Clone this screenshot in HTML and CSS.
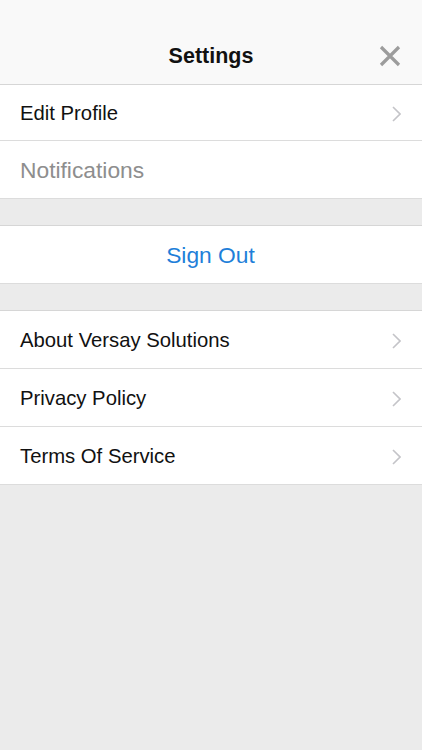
FILE: index.html
```html
<!DOCTYPE html>
<html lang="en">
<head>
    <meta charset="UTF-8">
    <meta name="viewport" content="width=device-width, initial-scale=1.0">
    <title>Settings</title>
    <link rel="stylesheet" href="styles.css">
</head>
<body>
    <header class="nav-bar">
        <h1 class="nav-title">Settings</h1>
        <button class="close-btn" aria-label="Close">
            <svg width="22" height="22" viewBox="0 0 22 22">
                <path d="M2 2 L20 20 M20 2 L2 20" stroke="#9c9c9c" stroke-width="3.2" fill="none"/>
            </svg>
        </button>
    </header>

    <ul class="group first">
        <li class="row">
            <span>Edit Profile</span>
            <svg class="chevron" width="9" height="16" viewBox="0 0 9 16"><path d="M1 1 L8 8 L1 15" stroke="#c4c4c8" stroke-width="1.6" fill="none"/></svg>
        </li>
        <li class="row disabled"><span>Notifications</span></li>
    </ul>

    <ul class="group">
        <li class="row action"><span>Sign Out</span></li>
    </ul>

    <ul class="group">
        <li class="row">
            <span>About Versay Solutions</span>
            <svg class="chevron" width="9" height="16" viewBox="0 0 9 16"><path d="M1 1 L8 8 L1 15" stroke="#c4c4c8" stroke-width="1.6" fill="none"/></svg>
        </li>
        <li class="row">
            <span>Privacy Policy</span>
            <svg class="chevron" width="9" height="16" viewBox="0 0 9 16"><path d="M1 1 L8 8 L1 15" stroke="#c4c4c8" stroke-width="1.6" fill="none"/></svg>
        </li>
        <li class="row">
            <span>Terms Of Service</span>
            <svg class="chevron" width="9" height="16" viewBox="0 0 9 16"><path d="M1 1 L8 8 L1 15" stroke="#c4c4c8" stroke-width="1.6" fill="none"/></svg>
        </li>
    </ul>
</body>
</html>
```

FILE: styles.css
```css
body {
    font-family: "Liberation Sans", Arial, sans-serif;
    background-color: #ebebeb;
    margin: 0;
    min-height: 750px;
}
.nav-bar {
    height: 85px;
    background: #f9f9f9;
    border-bottom: 1px solid #d6d6d6;
    display: flex;
    align-items: center;
    justify-content: center;
    padding-top: 29px;
    box-sizing: border-box;
}
.nav-title {
    margin: 0;
    font-size: 21.5px;
    font-weight: bold;
    color: #111;
}
.close-btn {
    position: absolute;
    top: 45px;
    right: 21px;
    background: none;
    border: none;
    padding: 0;
    width: 22px;
    height: 22px;
}
.group {
    list-style: none;
    margin: 26px 0 0;
    padding: 0;
    background: white;
    border-top: 1px solid #d6d6d6;
}
.group.first {
    margin-top: 0;
    border-top: none;
}
.row {
    height: 58px;
    box-sizing: border-box;
    display: flex;
    align-items: center;
    justify-content: space-between;
    padding: 2px 21px 0 20px;
    border-bottom: 1px solid #dcdcdc;
    font-size: 20.3px;
    color: #111;
}
.group.first .row:first-child {
    height: 56px;
}
.row.disabled {
    color: #8e8e8e;
    font-size: 22.8px;
}
.row.action {
    justify-content: center;
    color: #1f7fd9;
    font-size: 22.8px;
}
.chevron {
    display: block;
}
```
